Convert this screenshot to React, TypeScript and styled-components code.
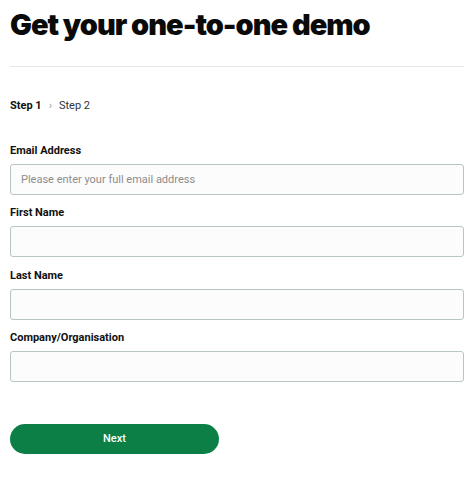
import styled, { createGlobalStyle } from "styled-components";

const GlobalStyle = createGlobalStyle`
  * { box-sizing: border-box; }
  body {
    margin: 0;
    background: #ffffff;
    font-family: Roboto, "Noto Sans", sans-serif;
    color: #111111;
  }
`;

const fields = [
  { label: "Email Address", placeholder: "Please enter your full email address" },
  { label: "First Name", placeholder: "" },
  { label: "Last Name", placeholder: "" },
  { label: "Company/Organisation", placeholder: "" },
];

export default function App() {
  return (
    <>
      <GlobalStyle />
      <S.Page>
        <S.Title>Get your one-to-one demo</S.Title>
        <S.Divider />
        <S.Steps>
          <S.Step $active>Step 1</S.Step>
          <S.Chevron>›</S.Chevron>
          <S.Step>Step 2</S.Step>
        </S.Steps>
        <S.Form>
          {fields.map((f) => (
            <S.Field key={f.label}>
              <S.Label>{f.label}</S.Label>
              <S.Input placeholder={f.placeholder} />
            </S.Field>
          ))}
          <S.Button type="button">Next</S.Button>
        </S.Form>
      </S.Page>
    </>
  );
}

const S = {
  Page: styled.div`
    padding: 6px 10px 0 10px;
    width: 474px;
  `,
  Title: styled.h1`
    margin: 0;
    font-family: Inter, "Noto Sans", sans-serif;
    font-size: 29px;
    font-weight: 900;
    letter-spacing: -1px;
    line-height: 38px;
    color: #0a0a0a;
  `,
  Divider: styled.hr`
    margin: 22px 0 0 0;
    border: none;
    border-top: 1px solid #e6e6e6;
    width: 454px;
  `,
  Steps: styled.div`
    display: flex;
    align-items: center;
    gap: 7px;
    margin-top: 30px;
    height: 16px;
  `,
  Step: styled.span<{ $active?: boolean }>`
    font-size: 11px;
    font-weight: ${({ $active }) => ($active ? 700 : 400)};
    color: ${({ $active }) => ($active ? "#111111" : "#333333")};
  `,
  Chevron: styled.span`
    font-size: 11px;
    color: #9a9a9a;
  `,
  Form: styled.form`
    display: flex;
    flex-direction: column;
    margin-top: 30px;
  `,
  Field: styled.div`
    display: flex;
    flex-direction: column;
    gap: 5px;
    margin-bottom: 10.4px;
  `,
  Label: styled.label`
    font-size: 11px;
    font-weight: 700;
    line-height: 16px;
    color: #111111;
  `,
  Input: styled.input`
    width: 454px;
    height: 31px;
    border: 1px solid #b9c4c4;
    border-radius: 3px;
    background: #fcfcfc;
    padding: 0 10px;
    font-family: Roboto, "Noto Sans", sans-serif;
    font-size: 11px;
    color: #111111;
    &::placeholder {
      color: #8c8c8c;
    }
  `,
  Button: styled.button`
    margin-top: 31px;
    width: 209px;
    height: 30px;
    border: none;
    border-radius: 15px;
    background: #0b7f45;
    color: #ffffff;
    font-family: Roboto, "Noto Sans", sans-serif;
    font-size: 11px;
    font-weight: 500;
    cursor: pointer;
  `,
};
